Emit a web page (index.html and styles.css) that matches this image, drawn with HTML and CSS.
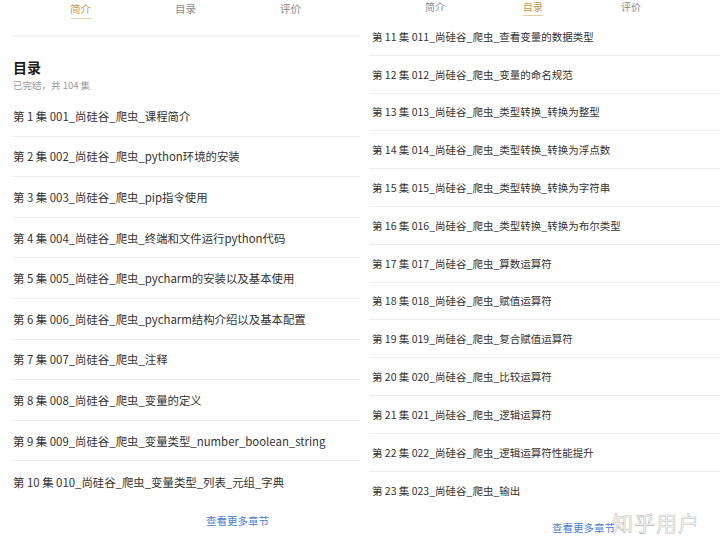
FILE: index.html
```html
<!DOCTYPE html>
<html lang="zh-CN">

<head>
    <meta charset="UTF-8" />
    <meta name="viewport" content="width=device-width, initial-scale=1" />
    <title>目录</title>
    <link rel="stylesheet" href="styles.css">
</head>

<body>
    <div class="shots">
        <section class="panel panel-left">
            <nav class="tabs">
                <span class="tab active">简介</span>
                <span class="tab">目录</span>
                <span class="tab">评价</span>
            </nav>
            <div class="catalog-head">
                <h2>目录</h2>
                <p class="meta">已完结，共 104 集</p>
            </div>
            <ul class="episodes">
                <li>第 1 集 001_尚硅谷_爬虫_课程简介</li>
                <li>第 2 集 002_尚硅谷_爬虫_python环境的安装</li>
                <li>第 3 集 003_尚硅谷_爬虫_pip指令使用</li>
                <li>第 4 集 004_尚硅谷_爬虫_终端和文件运行python代码</li>
                <li>第 5 集 005_尚硅谷_爬虫_pycharm的安装以及基本使用</li>
                <li>第 6 集 006_尚硅谷_爬虫_pycharm结构介绍以及基本配置</li>
                <li>第 7 集 007_尚硅谷_爬虫_注释</li>
                <li>第 8 集 008_尚硅谷_爬虫_变量的定义</li>
                <li>第 9 集 009_尚硅谷_爬虫_变量类型_number_boolean_string</li>
                <li>第 10 集 010_尚硅谷_爬虫_变量类型_列表_元组_字典</li>
            </ul>
            <a class="more">查看更多章节</a>
        </section>

        <section class="panel panel-right">
            <nav class="tabs">
                <span class="tab">简介</span>
                <span class="tab active">目录</span>
                <span class="tab">评价</span>
            </nav>
            <ul class="episodes">
                <li>第 11 集 011_尚硅谷_爬虫_查看变量的数据类型</li>
                <li>第 12 集 012_尚硅谷_爬虫_变量的命名规范</li>
                <li>第 13 集 013_尚硅谷_爬虫_类型转换_转换为整型</li>
                <li>第 14 集 014_尚硅谷_爬虫_类型转换_转换为浮点数</li>
                <li>第 15 集 015_尚硅谷_爬虫_类型转换_转换为字符串</li>
                <li>第 16 集 016_尚硅谷_爬虫_类型转换_转换为布尔类型</li>
                <li>第 17 集 017_尚硅谷_爬虫_算数运算符</li>
                <li>第 18 集 018_尚硅谷_爬虫_赋值运算符</li>
                <li>第 19 集 019_尚硅谷_爬虫_复合赋值运算符</li>
                <li>第 20 集 020_尚硅谷_爬虫_比较运算符</li>
                <li>第 21 集 021_尚硅谷_爬虫_逻辑运算符</li>
                <li>第 22 集 022_尚硅谷_爬虫_逻辑运算符性能提升</li>
                <li>第 23 集 023_尚硅谷_爬虫_输出</li>
            </ul>
            <a class="more">查看更多章节</a>
        </section>

        <span class="watermark">知乎用户</span>
    </div>
</body>

</html>
```

FILE: styles.css
```css
/* Reset */

* {
    margin: 0;
    padding: 0;
    box-sizing: border-box;
}

body {
    font-family: "Noto Sans CJK SC", "Liberation Sans", sans-serif;
    background: #ffffff;
    color: #333333;
    width: 720px;
    height: 540px;
    overflow: hidden;
}

.shots {
    position: relative;
    display: flex;
    gap: 2px;
    height: 540px;
}

.panel {
    display: flex;
    flex-direction: column;
}

.panel-left {
    width: 360px;
}

.panel-right {
    width: 358px;
}

/* Tabs */

.tabs {
    display: flex;
}

.tab {
    text-align: center;
    color: #8a8a8a;
    position: relative;
}

.tab.active {
    color: #c49a50;
}

.tab.active::after {
    content: '';
    position: absolute;
    left: 50%;
    width: 20px;
    margin-left: -10px;
    height: 1px;
    background: #e8cf9f;
}

.panel-left .tabs {
    height: 37px;
    margin-left: 12px;
    padding-left: 16px;
    padding-top: 1px;
    border-bottom: 2px solid #f4f4f4;
    font-size: 10.5px;
    line-height: 16px;
}

.panel-left .tab {
    width: 105px;
}

.panel-left .tab.active::after {
    top: 17px;
}

.panel-right .tabs {
    height: 18px;
    padding-left: 24px;
    font-size: 10px;
    line-height: 14px;
}

.panel-right .tab {
    width: 98px;
}

.panel-right .tab.active::after {
    top: 15px;
}

/* Catalog header */

.catalog-head {
    padding: 20px 13px 0;
    height: 59px;
}

.catalog-head h2 {
    font-size: 14px;
    font-weight: 700;
    color: #1a1a1a;
    line-height: 20px;
}

.meta {
    font-size: 9.5px;
    color: #9a9a9a;
    line-height: 14px;
    margin-top: 1px;
}

/* Episodes */

.episodes {
    list-style: none;
}

.episodes li {
    display: flex;
    align-items: center;
    border-bottom: 1px solid #eeeeee;
    white-space: nowrap;
    color: #333333;
}

.episodes li:last-child {
    border-bottom: none;
}

.panel-left .episodes {
    margin-left: 12px;
}

.panel-left .episodes li {
    height: 40.6px;
    padding-left: 1px;
    font-size: 11.4px;
}

.panel-right .episodes {
    margin-left: 8px;
}

.panel-right .episodes li {
    height: 37.8px;
    padding-left: 2px;
    font-size: 10.5px;
}

.more {
    display: block;
    color: #4a80d4;
    font-size: 10.5px;
    margin-top: 11px;
}

.panel-left .more {
    margin-left: 206px;
}

.panel-right .more {
    margin-left: 190px;
}

/* Overlay watermark */

.watermark {
    position: absolute;
    left: 612px;
    top: 507px;
    font-family: "Noto Sans CJK SC", sans-serif;
    font-size: 21px;
    font-weight: 400;
    letter-spacing: 1px;
    color: #ffffff;
    -webkit-text-stroke: 0.6px #bdbdbd;
}
```
